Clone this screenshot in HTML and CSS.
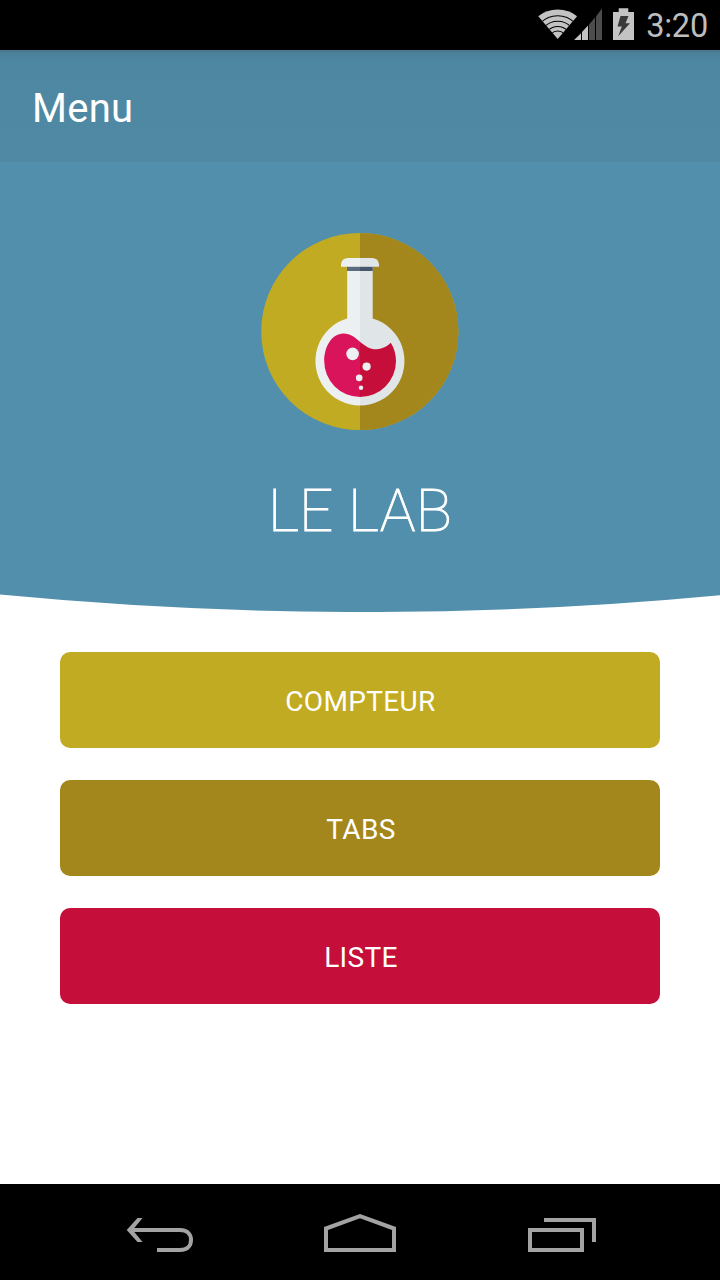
FILE: index.html
```html
<!DOCTYPE html>
<html lang="fr">
<head>
<meta charset="utf-8">
<title>Menu</title>
<link rel="stylesheet" href="styles.css">
</head>
<body>
<div class="screen">
  <div class="status-bar">
    <svg class="status-icons" viewBox="538 0 100 50" aria-hidden="true">
      <defs>
        <clipPath id="wifi-fan"><path d="M557.7 39 L538.3 16.2 Q546.5 9.6 557.7 9.6 T577.1 16.2Z"/></clipPath>
      </defs>
      <path d="M557.7 39 L538.3 16.2 Q546.5 9.6 557.7 9.6 T577.1 16.2Z" fill="#c3c3c3"/>
      <g clip-path="url(#wifi-fan)" fill="none" stroke="#000" stroke-width="1.1">
        <circle cx="557.7" cy="40" r="24.2"/>
        <circle cx="557.7" cy="40" r="18.7"/>
        <circle cx="557.7" cy="40" r="13.5"/>
        <circle cx="557.7" cy="40" r="9"/>
      </g>
      <path d="M574 40 L581 33.2V40Z M582 40V32L588 25.5V40Z" fill="#c3c3c3"/>
      <path d="M589 40V24.5L595 17.5V40Z M596 40V16.5L602 8.5V40Z" fill="#4c4c4c"/>
      <path d="M613 12H618.7V8.3H628.3V12H634V40H613Z" fill="#c3c3c3"/>
      <path d="M620.5 16H628.5L625.5 23.3H630L618.2 36.2L621.8 26.5H617.5Z" fill="#383838"/>
    </svg>
    <span class="clock">3:20</span>
  </div>
  <header class="app-bar"><h1 class="app-title">Menu</h1></header>
  <main class="content">
    <section class="hero">
      <svg class="logo" viewBox="260 232 200 200" aria-hidden="true">
        <defs>
          <clipPath id="left-half"><path d="M260 232H360V432H260Z"/></clipPath>
          <clipPath id="right-half"><path d="M360 232H460V432H360Z"/></clipPath>
          <path id="flask" d="M347.2 265H372.7V318.4A44.5 44.5 0 1 1 347.2 318.4Z"/>
          <path id="rim" d="M341 266.8V264Q342 258 348 258H372Q378 258 379 264V266.8Z"/>
          <path id="liquid" d="M324.2 361C324.2 348 331 333.5 343.5 333.5C357 333.5 362 349.2 376.5 349.2C383 349.2 388 345.5 390.8 342.8C394 348 396 354 396 361A35.9 35.9 0 0 1 324.2 361Z"/>
        </defs>
        <circle cx="359.8" cy="331.5" r="98.6" fill="#c1ab23"/>
        <g clip-path="url(#right-half)"><circle cx="359.8" cy="331.5" r="98.6" fill="#a3871c"/></g>
        <g clip-path="url(#left-half)">
          <use href="#flask" fill="#ecf0f1"/><use href="#rim" fill="#ecf0f1"/>
          <path d="M347 266.8H360V271H347Z" fill="#5d6b7e"/>
          <use href="#liquid" fill="#d9145b"/>
        </g>
        <g clip-path="url(#right-half)">
          <use href="#flask" fill="#e0e5e8"/><use href="#rim" fill="#e0e5e8"/>
          <path d="M360 266.8H372.7V271H360Z" fill="#46566b"/>
          <use href="#liquid" fill="#c50e39"/>
        </g>
        <g fill="#ecf0f1">
          <circle cx="352.6" cy="353.9" r="6.3"/>
          <circle cx="366.6" cy="366.6" r="4.1"/>
          <circle cx="359.2" cy="377.9" r="3.3"/>
          <circle cx="361" cy="387.8" r="2.2"/>
        </g>
      </svg>
      <h2 class="brand">LE LAB</h2>
    </section>
    <svg class="curve" viewBox="0 0 720 18" aria-hidden="true"><path d="M0 0H720V1.2A3800 3800 0 0 1 0 .6Z" fill="#528fac"/></svg>
    <nav class="actions">
      <button class="action action-counter">COMPTEUR</button>
      <button class="action action-tabs">TABS</button>
      <button class="action action-list">LISTE</button>
    </nav>
  </main>
  <div class="nav-bar">
    <svg class="nav-icon nav-back" viewBox="126 1212 68 42"><path d="M157 1250H180C188 1250 191 1245 191 1240S188 1230 180 1230H130"/><path class="nav-solid" d="M137.5 1218H142.5L132.7 1230L142.5 1242H137.5L126.7 1230Z"/></svg>
    <svg class="nav-icon nav-home" viewBox="323 1212 74 42"><path d="M326 1250V1228.5L360 1216.2L394 1228.5V1250Z"/></svg>
    <svg class="nav-icon nav-recent" viewBox="527 1212 70 42"><path d="M530 1230H582V1250H530ZM544 1220H594V1242"/></svg>
  </div>
</div>
</body>
</html>
```
FILE: styles.css
```css
* { box-sizing: border-box; }
body { margin: 0; font-family: Roboto, "Liberation Sans", sans-serif; }
.screen { width: 720px; height: 1280px; display: flex; flex-direction: column; overflow: hidden; background: #fff; }
.status-bar { height: 50px; flex: none; display: flex; justify-content: flex-end; background: #000; padding-right: 12px; }
.status-icons { width: 100px; height: 50px; }
.clock { margin-left: 8px; color: #bebebe; font-size: 32.5px; line-height: 53px; letter-spacing: -.2px; }
.app-bar { height: 112px; flex: none; display: flex; align-items: center; padding: 6px 32px 0; background: linear-gradient(#467588 0, #4b8099 3px, #4e87a1 12px, #4f89a4 100%); }
.app-title { margin: 0; color: #fff; font-size: 40px; font-weight: 400; line-height: 48px; letter-spacing: .3px; }
.content { flex: 1; display: flex; flex-direction: column; }
.hero { height: 432px; display: flex; flex-direction: column; align-items: center; background: #528fac; padding-top: 70px; }
.logo { width: 200px; height: 200px; flex: none; }
.brand { margin: 43px 0 0; color: #fff; font-size: 60px; font-weight: 100; line-height: 72px; letter-spacing: .2px; -webkit-text-stroke: .9px #fff; }
.curve { width: 720px; height: 18px; display: block; flex: none; }
.actions { display: flex; flex-direction: column; gap: 32px; padding: 40px 60px 0; }
.action { height: 96px; border: 0; border-radius: 10px; padding: 3px 0 0 1px; color: #fff; font-family: inherit; font-size: 28px; letter-spacing: .35px; }
.action-counter { background: #c1ab23; }
.action-tabs { padding-left: 2px; background: #a3871c; }
.action-list { padding-left: 2px; background: #c50e39; }
.nav-bar { height: 96px; flex: none; display: flex; align-items: flex-start; background: #000; padding: 28px 0 0 126px; }
.nav-icon { height: 42px; fill: none; stroke: #a3a3a3; stroke-width: 4; }
.nav-solid { fill: #a3a3a3; stroke: none; }
.nav-back { width: 68px; }
.nav-home { width: 74px; margin-left: 129px; }
.nav-recent { width: 70px; margin-left: 130px; }
```
